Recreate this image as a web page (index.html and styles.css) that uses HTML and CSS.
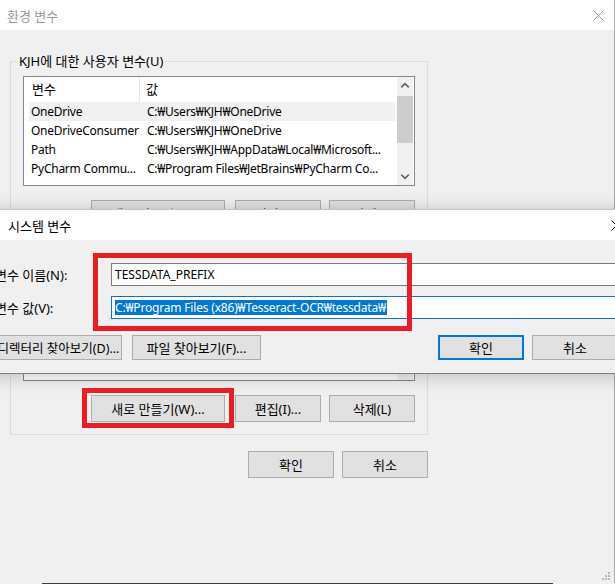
FILE: index.html
```html
<!DOCTYPE html>
<html lang="ko">
<head>
  <meta charset="UTF-8">
  <title>환경 변수</title>
  <link rel="stylesheet" href="styles.css">
</head>
<body>
<div class="screen">

  <div class="window env">
    <div class="titlebar">
      <span class="title">환경 변수</span>
      <svg class="close" width="11" height="11" viewBox="0 0 11 11"><path d="M0.5 0.5 L10.5 10.5 M10.5 0.5 L0.5 10.5" stroke="#9a9a9a" stroke-width="1" fill="none"/></svg>
    </div>

    <div class="window-body">
      <fieldset class="group">
        <legend>KJH에 대한 사용자 변수(U)</legend>
        <div class="listview">
          <div class="lv-main">
            <div class="lv-head"><span class="c1">변수</span><span class="c2">값</span></div>
            <div class="lv-row selected"><span class="c1">OneDrive</span><span class="c2">C:₩Users₩KJH₩OneDrive</span></div>
            <div class="lv-row"><span class="c1">OneDriveConsumer</span><span class="c2">C:₩Users₩KJH₩OneDrive</span></div>
            <div class="lv-row"><span class="c1">Path</span><span class="c2">C:₩Users₩KJH₩AppData₩Local₩Microsoft...</span></div>
            <div class="lv-row"><span class="c1">PyCharm Commu...</span><span class="c2">C:₩Program Files₩JetBrains₩PyCharm Co...</span></div>
          </div>
          <div class="vscroll">
            <svg class="arrow" width="17" height="17" viewBox="0 0 17 17"><path d="M4.5 10.5 L8.5 6.5 L12.5 10.5" stroke="#606060" stroke-width="1.6" fill="none"/></svg>
            <div class="thumb"></div>
            <div class="track"></div>
            <svg class="arrow" width="17" height="17" viewBox="0 0 17 17"><path d="M4.5 6.5 L8.5 10.5 L12.5 6.5" stroke="#606060" stroke-width="1.6" fill="none"/></svg>
          </div>
        </div>
        <div class="btnrow">
          <button class="btn new">새로 만들기(W)...</button>
          <button class="btn">편집(I)...</button>
          <button class="btn">삭제(L)</button>
        </div>
      </fieldset>

      <fieldset class="group second">
        <legend>시스템 변수(S)</legend>
        <div class="listview">
          <div class="lv-main">
            <div class="lv-head"><span class="c1">변수</span><span class="c2">값</span></div>
            <div class="lv-row"><span class="c1">ComSpec</span><span class="c2">C:₩WINDOWS₩system32₩cmd.exe</span></div>
            <div class="lv-row"><span class="c1">NUMBER_OF_PR...</span><span class="c2">8</span></div>
            <div class="lv-row"><span class="c1">OS</span><span class="c2">Windows_NT</span></div>
            <div class="lv-row"><span class="c1">Path</span><span class="c2">C:₩Program Files₩Common Files₩Oracle...</span></div>
          </div>
          <div class="vscroll">
            <svg class="arrow" width="17" height="17" viewBox="0 0 17 17"><path d="M4.5 10.5 L8.5 6.5 L12.5 10.5" stroke="#606060" stroke-width="1.6" fill="none"/></svg>
            <div class="thumb"></div>
            <div class="track"></div>
            <svg class="arrow" width="17" height="17" viewBox="0 0 17 17"><path d="M4.5 6.5 L8.5 10.5 L12.5 6.5" stroke="#606060" stroke-width="1.6" fill="none"/></svg>
          </div>
        </div>
        <div class="btnrow">
          <button class="btn new">새로 만들기(W)...</button>
          <button class="btn">편집(I)...</button>
          <button class="btn">삭제(L)</button>
        </div>
      </fieldset>

      <div class="footer">
        <button class="btn">확인</button>
        <button class="btn">취소</button>
      </div>
    </div>

    <svg class="grip" width="9" height="9" viewBox="0 0 9 9" fill="#b8b8b8">
      <rect x="6" y="0" width="2" height="2"/>
      <rect x="3" y="3" width="2" height="2"/><rect x="6" y="3" width="2" height="2"/>
      <rect x="0" y="6" width="2" height="2"/><rect x="3" y="6" width="2" height="2"/><rect x="6" y="6" width="2" height="2"/>
    </svg>
  </div>

  <!-- 편집 대화상자 -->
  <div class="window dialog">
    <div class="titlebar">
      <span class="title">시스템 변수</span>
      <svg class="close" width="11" height="11" viewBox="0 0 11 11"><path d="M0.5 0.5 L10.5 10.5 M10.5 0.5 L0.5 10.5" stroke="#000" stroke-width="1" fill="none"/></svg>
    </div>
    <div class="dialog-body">
      <div class="field-row">
        <label>변수 이름(N):</label>
        <div class="field">TESSDATA_PREFIX</div>
      </div>
      <div class="field-row">
        <label>변수 값(V):</label>
        <div class="field focus"><span class="sel">C:₩Program Files (x86)₩Tesseract-OCR₩tessdata₩</span></div>
      </div>
      <div class="dialog-buttons">
        <div class="left">
          <button class="btn browse-dir">디렉터리 찾아보기(D)...</button>
          <button class="btn browse-file">파일 찾아보기(F)...</button>
        </div>
        <div class="right">
          <button class="btn default">확인</button>
          <button class="btn">취소</button>
        </div>
      </div>
    </div>
  </div>

  <!-- 빨간 표시 -->
  <div class="mark mark-fields"></div>
  <div class="mark mark-new"></div>

  <div class="desk-edge"></div>
</div>
</body>
</html>
```

FILE: styles.css
```css
body {
  margin: 0;
  background: #f0f0f0;
  font-family: "Noto Sans", "Noto Sans CJK KR", sans-serif;
  font-size: 13px;
  color: #000;
}

.screen {
  position: relative;
  width: 615px;
  height: 584px;
  overflow: hidden;
  background: #f0f0f0;
}

.window {
  box-sizing: border-box;
  background: #f0f0f0;
}

.env {
  position: relative;
  width: 615px;
  height: 583px;
  border-right: 1px solid #a8a8a8;
}

.titlebar {
  height: 30px;
  background: #fff;
  display: flex;
  align-items: center;
  justify-content: space-between;
  padding-left: 7px;
  padding-right: 10px;
}

.env .title {
  color: #999;
}

.window-body {
  padding: 23px 0 0 10px;
}

.group {
  box-sizing: border-box;
  width: 418px;
  margin: 0;
  padding: 0 0 12px 0;
  border: 1px solid #dcdcdc;
}

.group legend {
  margin-left: 6px;
  padding: 0 2px;
  line-height: 17px;
}

.group.second {
  margin-top: 8px;
}

.listview {
  box-sizing: border-box;
  display: flex;
  width: 392px;
  height: 110px;
  margin: 6px 0 0 12px;
  border: 1px solid #828790;
  background: #fff;
  overflow: hidden;
}

.lv-main {
  flex: 1;
  overflow: hidden;
  padding-right: 2px;
}

.lv-head {
  display: flex;
  height: 25px;
  line-height: 25px;
}

.lv-head .c1 {
  box-sizing: border-box;
  width: 116px;
  padding-left: 8px;
  border-right: 1px solid #e5e5e5;
}

.lv-head .c2 {
  padding-left: 6px;
}

.lv-row {
  display: flex;
  height: 19px;
  line-height: 19px;
  margin-left: 5px;
  font-size: 12px;
  letter-spacing: -0.25px;
  white-space: nowrap;
}

.lv-row.selected {
  background: #f0f0f0;
}

.lv-row .c1 {
  box-sizing: border-box;
  width: 111px;
  padding-left: 2px;
  overflow: hidden;
}

.lv-row .c2 {
  padding-left: 7px;
  overflow: hidden;
}

.vscroll {
  width: 16px;
  margin-right: 1px;
  background: #f0f0f0;
  display: flex;
  flex-direction: column;
}

.vscroll .arrow {
  width: 16px;
  height: 17px;
  flex: none;
}

.vscroll .thumb {
  height: 47px;
  margin-top: 2px;
  background: #cdcdcd;
}

.vscroll .track {
  flex: 1;
}

.btnrow {
  display: flex;
  justify-content: flex-end;
  gap: 8px;
  width: 392px;
  margin: 14px 0 0 12px;
}

.btn {
  box-sizing: border-box;
  width: 86px;
  height: 27px;
  padding: 0;
  border: 1px solid #adadad;
  background: #e1e1e1;
  font-family: inherit;
  font-size: 13px;
  color: #000;
  white-space: nowrap;
}

.btn.new {
  width: 134px;
  margin-right: 2px;
}

.footer {
  display: flex;
  justify-content: flex-end;
  gap: 8px;
  width: 418px;
  margin-top: 16px;
}

.grip {
  position: absolute;
  right: 3px;
  bottom: 2px;
}

/* 겹쳐 뜬 대화상자 */
.dialog {
  position: absolute;
  top: 209px;
  left: -16px;
  width: 648px;
  height: 165px;
  border: 1px solid #7f7f7f;
  border-top-color: #c4c4c4;
  box-shadow: 0 2px 18px rgba(0, 0, 0, 0.22);
}

.dialog .titlebar {
  padding-left: 23px;
  padding-right: 9px;
}

.dialog-body {
  padding: 23px 13px 0 10px;
}

.field-row {
  display: flex;
  align-items: center;
  margin-bottom: 10px;
}

.field-row label {
  width: 116px;
  flex: none;
  white-space: nowrap;
}

.field {
  box-sizing: border-box;
  flex: 1;
  height: 23px;
  display: flex;
  align-items: center;
  padding-left: 3px;
  border: 1px solid #7a7a7a;
  background: #fff;
  font-size: 12px;
  white-space: nowrap;
}

.field.focus {
  border-color: #0078d7;
}

.sel {
  background: #0078d7;
  color: #fff;
  line-height: 15px;
  letter-spacing: -0.18px;
  padding-right: 1px;
}

.dialog-buttons {
  display: flex;
  justify-content: space-between;
  margin-top: 16px;
}

.dialog-buttons .left,
.dialog-buttons .right {
  display: flex;
}

.dialog-buttons .btn {
  height: 25px;
}

.dialog-buttons .left {
  gap: 10px;
}

.dialog-buttons .right {
  gap: 8px;
}

.btn.browse-dir {
  width: 127px;
  font-size: 12.5px;
}

.btn.browse-file {
  width: 129px;
}

.btn.default {
  border: 2px solid #0078d7;
}

/* 빨간 표시 */
.mark {
  position: absolute;
  box-sizing: border-box;
  border: 5px solid #ed1c24;
}

.mark-fields {
  left: 93px;
  top: 253px;
  width: 319px;
  height: 78px;
}

.mark-new {
  left: 82px;
  top: 388px;
  width: 152px;
  height: 40px;
}

.desk-edge {
  position: absolute;
  left: 42px;
  bottom: 0;
  width: 511px;
  height: 1px;
  background: #3a3a3a;
}
```
